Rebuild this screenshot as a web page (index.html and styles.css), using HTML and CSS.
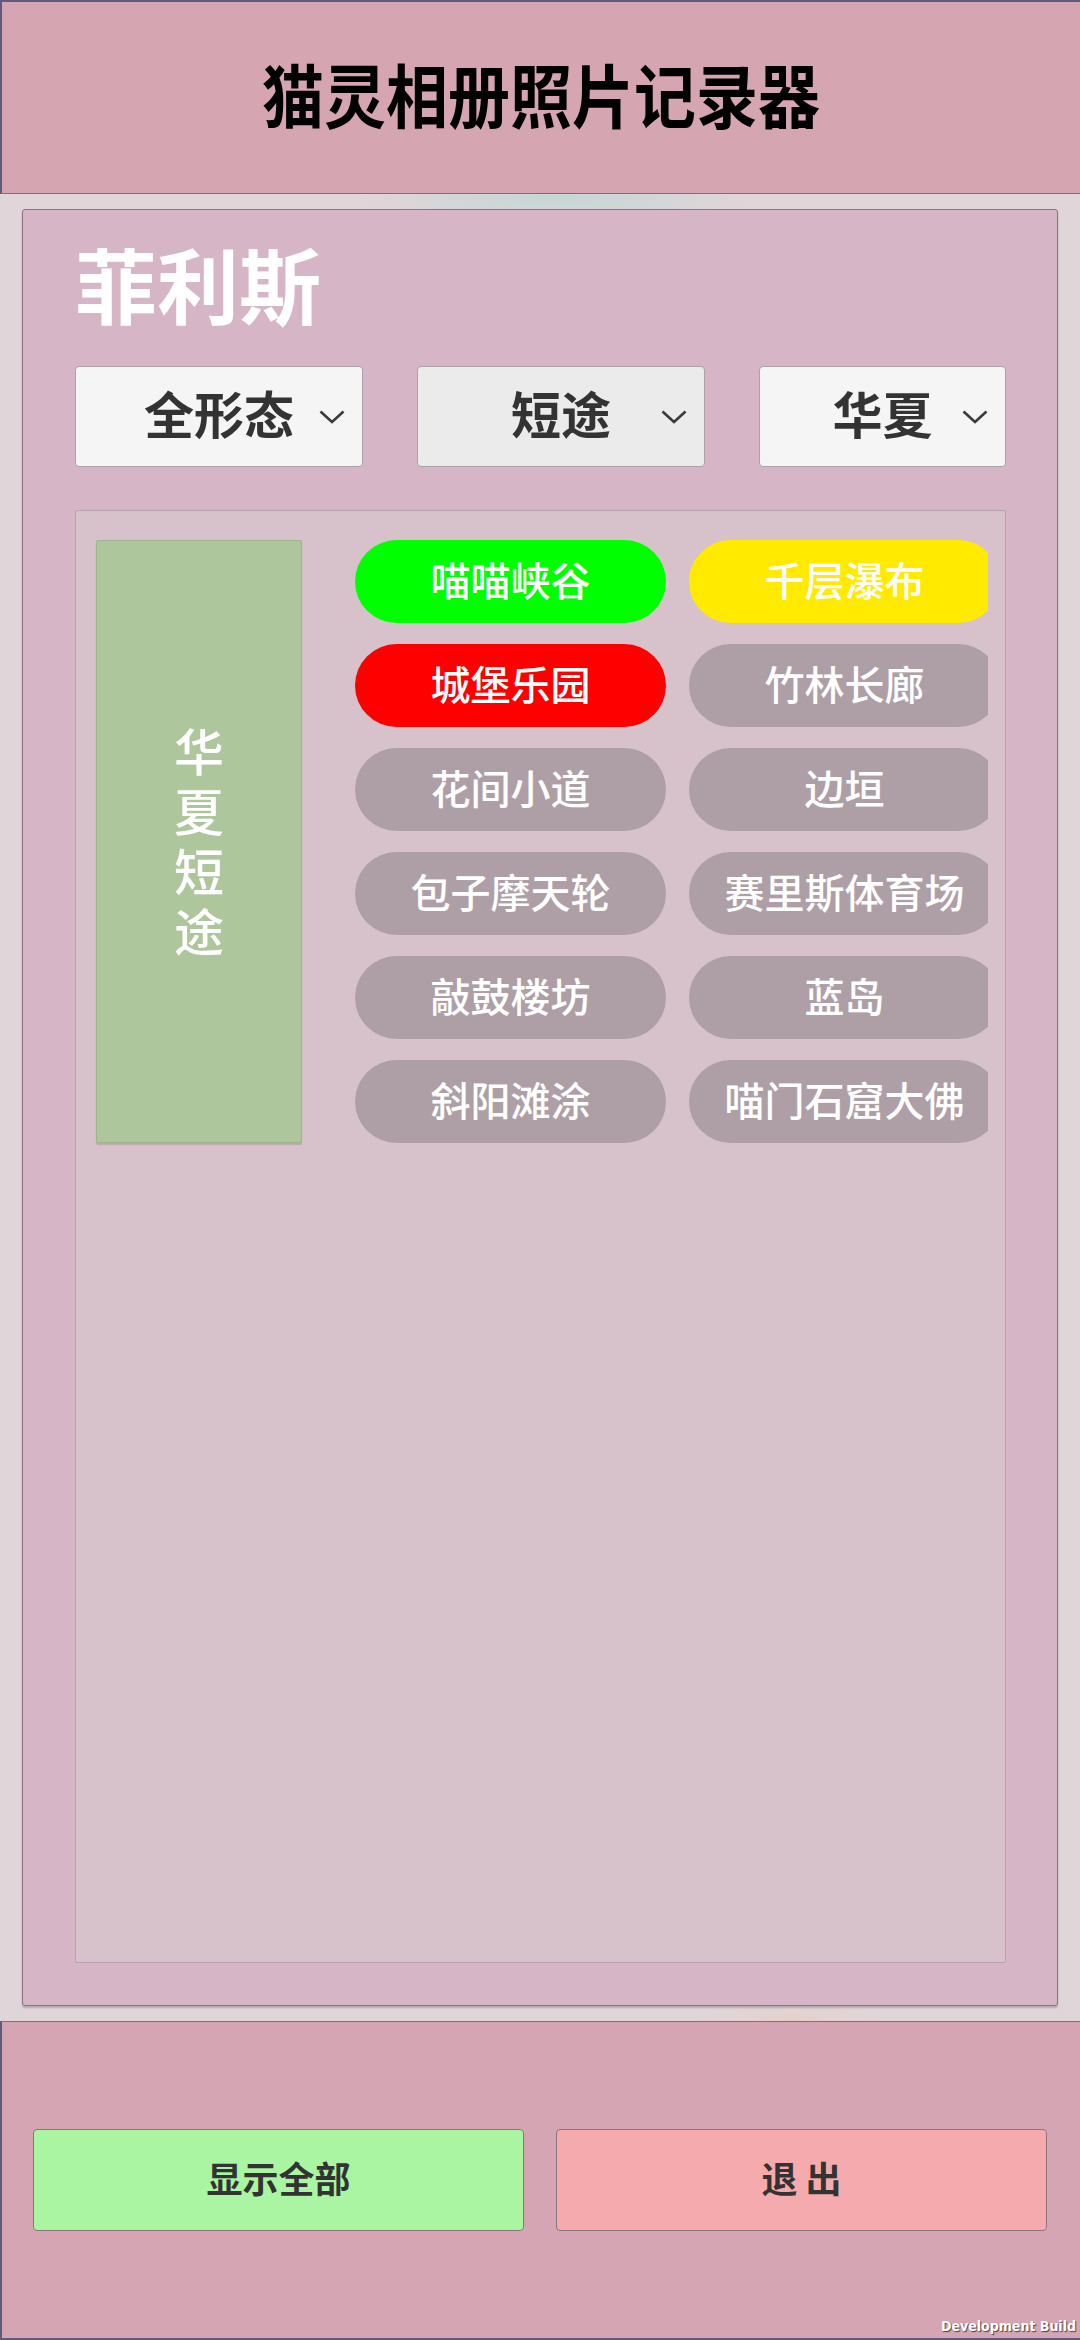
FILE: index.html
```html
<!DOCTYPE html>
<html lang="zh-CN">
<head>
    <meta charset="UTF-8">
    <meta name="viewport" content="width=device-width, initial-scale=1.0">
    <title>猫灵相册照片记录器</title>
    <link rel="stylesheet" href="styles.css">
</head>
<body>

<div class="screen">
    <header class="topbar">
        <h1>猫灵相册照片记录器</h1>
    </header>

    <main class="stage">
        <section class="card">
            <h2 class="cat-name">菲利斯</h2>

            <div class="filters">
                <div class="picker picker-wide">
                    <span>全形态</span>
                    <svg class="chevron" viewBox="0 0 26 14"><path d="M1.5 1.5 L13 12 L24.5 1.5"/></svg>
                </div>
                <div class="picker picker-wide picker-active">
                    <span>短途</span>
                    <svg class="chevron" viewBox="0 0 26 14"><path d="M1.5 1.5 L13 12 L24.5 1.5"/></svg>
                </div>
                <div class="picker picker-narrow">
                    <span>华夏</span>
                    <svg class="chevron" viewBox="0 0 26 14"><path d="M1.5 1.5 L13 12 L24.5 1.5"/></svg>
                </div>
            </div>

            <div class="panel">
                <div class="group-row">
                    <div class="group-tag"><span>华夏短途</span></div>
                    <div class="spots-view">
                        <div class="spots">
                            <div class="spot spot-green">喵喵峡谷</div>
                            <div class="spot spot-yellow">千层瀑布</div>
                            <div class="spot spot-red">城堡乐园</div>
                            <div class="spot">竹林长廊</div>
                            <div class="spot">花间小道</div>
                            <div class="spot">边垣</div>
                            <div class="spot">包子摩天轮</div>
                            <div class="spot">赛里斯体育场</div>
                            <div class="spot">敲鼓楼坊</div>
                            <div class="spot">蓝岛</div>
                            <div class="spot">斜阳滩涂</div>
                            <div class="spot">喵门石窟大佛</div>
                        </div>
                    </div>
                </div>
            </div>
        </section>
    </main>

    <footer class="bottombar">
        <button class="action action-show">显示全部</button>
        <button class="action action-exit">退 出</button>
    </footer>

    <div class="dev-build">Development Build</div>
</div>

</body>
</html>
```

FILE: styles.css
```css
html, body {
    margin: 0;
    padding: 0;
}
body {
    font-family: "Noto Sans CJK SC", "Noto Sans", sans-serif;
    background: #e0d5d9;
}
.screen {
    position: relative;
    width: 1080px;
    height: 2340px;
    display: flex;
    flex-direction: column;
    overflow: hidden;
}
.topbar {
    flex-shrink: 0;
    background: #d6a5b2;
    border-top: 2px solid #5e5a80;
    border-left: 2px solid #5e5a80;
    border-bottom: 1px solid #8a6a78;
    box-sizing: border-box;
    height: 194px;
    display: flex;
    align-items: center;
    justify-content: center;
    padding-bottom: 10px;
}
.topbar h1 {
    margin: 0;
    font-size: 62px;
    font-weight: 700;
    color: #000;
    line-height: 1;
    transform: scaleY(1.12);
}
.stage {
    flex: 1;
    display: flex;
    min-width: 0;
    padding: 15px 22px;
    background:
        radial-gradient(ellipse 190px 30px at 555px 4px, #c5d7d5, rgba(197, 215, 213, 0)),
        radial-gradient(ellipse 90px 20px at 790px 100%, #e6d0cb, rgba(230, 208, 203, 0)),
        #e0d5d9;
}
.card {
    flex: 1;
    min-width: 0;
    display: flex;
    flex-direction: column;
    background: #d6b6c6;
    border: 1px solid #8a7482;
    border-radius: 3px;
    box-shadow: 0 2px 2px rgba(0, 0, 0, 0.2);
    padding: 32px 51px 42px 52px;
}
.cat-name {
    margin: 0 0 42px;
    font-size: 82px;
    line-height: 82px;
    font-weight: 700;
    color: #fff;
}
.filters {
    display: flex;
    justify-content: space-between;
}
.picker {
    position: relative;
    height: 101px;
    box-sizing: border-box;
    background: #f5f5f5;
    border: 1px solid #a9a3a6;
    border-radius: 4px;
    display: flex;
    align-items: center;
    justify-content: center;
    padding-bottom: 10px;
    font-size: 50px;
    font-weight: 700;
    color: #333;
}
.picker-wide {
    width: 288px;
}
.picker-narrow {
    width: 247px;
}
.picker-active {
    background: #ebebeb;
}
.chevron {
    position: absolute;
    right: 17px;
    top: 43px;
    width: 26px;
    height: 14px;
    fill: none;
    stroke: #3a3a3a;
    stroke-width: 2.6;
}
.panel {
    flex: 1;
    min-width: 0;
    margin-top: 43px;
    background: #d7c2cc;
    border: 1px solid #b8a2ad;
    border-radius: 2px;
    padding: 29px 17px 0 20px;
}
.group-row {
    display: flex;
    gap: 53px;
}
.group-tag {
    width: 206px;
    flex-shrink: 0;
    box-sizing: border-box;
    background: #adc69c;
    border: 1px solid #9db48c;
    border-radius: 2px;
    box-shadow: 0 2px 1px rgba(0, 0, 0, 0.12);
    display: flex;
    align-items: center;
    justify-content: center;
    padding-top: 10px;
}
.group-tag span {
    writing-mode: vertical-rl;
    text-orientation: upright;
    letter-spacing: 10px;
    font-size: 50px;
    line-height: 50px;
    font-weight: 500;
    color: #fff;
}
.spots-view {
    flex: 1;
    width: 0;
    overflow: hidden;
}
.spots {
    display: grid;
    grid-template-columns: repeat(2, 311px);
    column-gap: 23px;
    row-gap: 21px;
}
.spot {
    height: 83px;
    box-sizing: border-box;
    padding-bottom: 5px;
    border-radius: 42px;
    background: #ae9fa6;
    display: flex;
    align-items: center;
    justify-content: center;
    font-size: 40px;
    font-weight: 500;
    color: #fff;
    white-space: nowrap;
}
.spot-green {
    background: #00ff00;
}
.spot-yellow {
    background: #ffea00;
}
.spot-red {
    background: #ff0000;
}
.bottombar {
    height: 319px;
    flex-shrink: 0;
    box-sizing: border-box;
    background: #d6a5b3;
    border-top: 1px solid #8a6a78;
    border-bottom: 2px solid #5e5a80;
    border-left: 2px solid #5e5a80;
    display: flex;
    align-items: center;
    gap: 32px;
    padding: 0 33px 0 31px;
}
.action {
    flex: 1;
    height: 102px;
    padding: 0 0 6px;
    border: 1px solid #8f7480;
    border-radius: 4px;
    font-family: inherit;
    font-size: 36px;
    font-weight: 700;
    color: #333;
    cursor: pointer;
}
.action-show {
    background: #a9f5a1;
}
.action-exit {
    background: #f5abad;
}
.dev-build {
    position: absolute;
    right: 4px;
    bottom: 6px;
    font-family: "Liberation Sans Narrow", "DejaVu Sans Condensed", sans-serif;
    font-size: 14px;
    font-weight: 700;
    color: #fff;
    text-shadow: 1px 1px 1px #444;
}
```
